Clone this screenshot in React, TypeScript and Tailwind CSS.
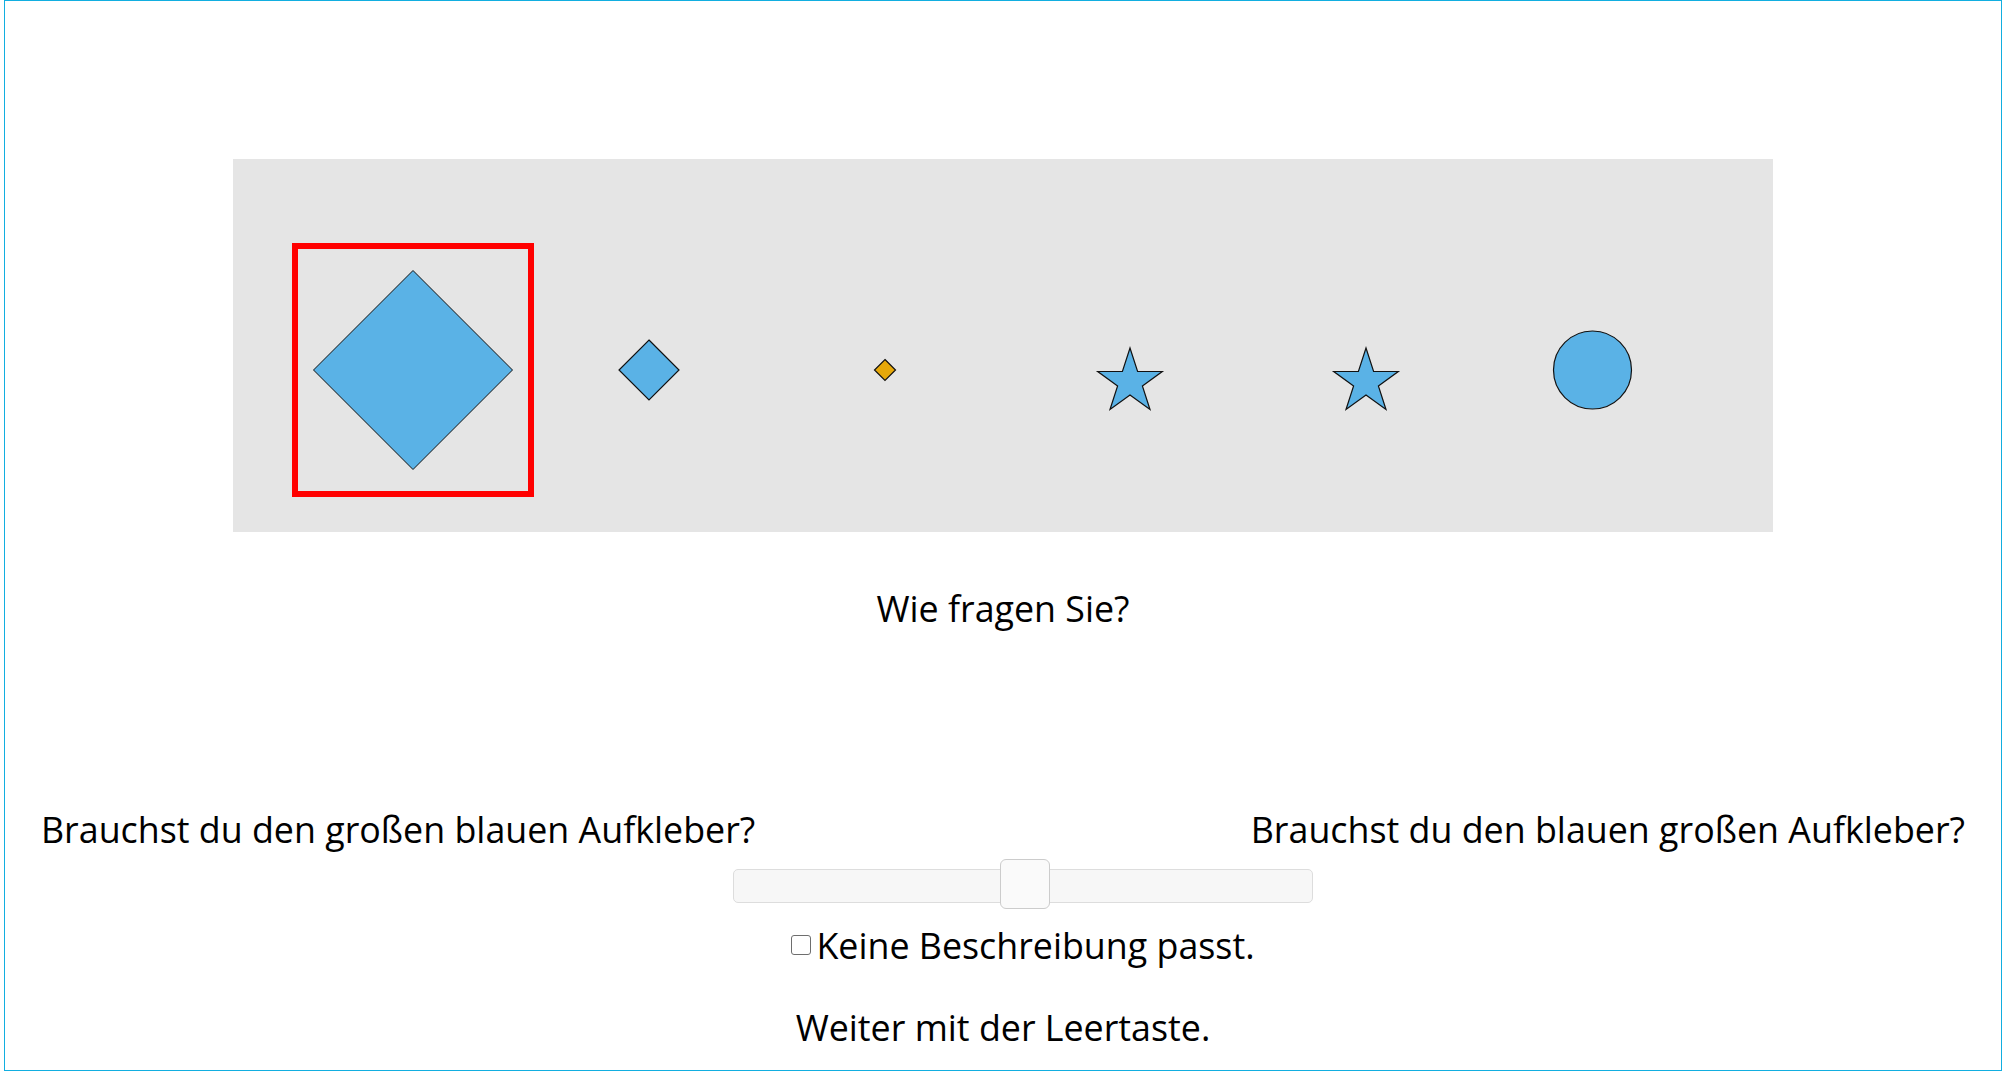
import React from "react";

const BLUE = "#5ab2e6";

// five-pointed star, points computed from the centre
function starPoints(cx: number, cy: number, R: number, r: number) {
  const pts: string[] = [];
  for (let i = 0; i < 10; i++) {
    const rad = i % 2 === 0 ? R : r;
    const a = (i * 36 * Math.PI) / 180;
    pts.push(`${(cx + rad * Math.sin(a)).toFixed(1)},${(cy - rad * Math.cos(a)).toFixed(1)}`);
  }
  return pts.join(" ");
}

function diamond(cx: number, cy: number, h: number) {
  return `${cx},${cy - h} ${cx + h},${cy} ${cx},${cy + h} ${cx - h},${cy}`;
}

function Stimuli() {
  return (
    <div className="mx-auto w-[1540px] h-[373px] bg-[#e5e5e5]">
      <svg width="1540" height="373" viewBox="0 0 1540 373">
        {/* selected item */}
        <rect x="62" y="87" width="236" height="248" fill="none" stroke="#ff0000" strokeWidth="6" />
        <polygon points={diamond(180, 211, 99.5)} fill={BLUE} stroke="#111" strokeWidth="1" />
        <polygon points={diamond(416, 211, 30)} fill={BLUE} stroke="#111" strokeWidth="1.2" />
        <polygon points={diamond(652, 211, 10.5)} fill="#e6a80a" stroke="#111" strokeWidth="1.2" />
        <polygon points={starPoints(897, 223, 34, 13)} fill={BLUE} stroke="#111" strokeWidth="1.2" />
        <polygon points={starPoints(1133, 223, 34, 13)} fill={BLUE} stroke="#111" strokeWidth="1.2" />
        <circle cx="1359.5" cy="211" r="39" fill={BLUE} stroke="#111" strokeWidth="1.2" />
      </svg>
    </div>
  );
}

export default function App() {
  return (
    <div className="min-h-screen bg-white text-black font-['Open_Sans',sans-serif] text-[35.8px] leading-[48px]">
      <div className="ml-[4px] w-[1998px] h-[1071px] border border-[#12aee0] pt-[158px]">
        <Stimuli />

        <p className="mt-[52px] text-center">Wie fragen Sie?</p>

        {/* answer options */}
        <div className="mt-[173px] flex justify-between px-[36px]">
          <span>Brauchst du den großen blauen Aufkleber?</span>
          <span>Brauchst du den blauen großen Aufkleber?</span>
        </div>

        <div className="mt-[16px] flex justify-center pl-[40px]">
          <div className="relative w-[580px] h-[34px] rounded-[5px] border border-[#dddddd] bg-[#f7f7f7]">
            <div className="absolute left-[266px] top-[-11px] w-[50px] h-[50px] rounded-[6px] border border-[#cccccc] bg-[#fafafa]" />
          </div>
        </div>

        <div className="mt-[18px] flex justify-center items-center pl-[40px]">
          <span className="w-[20px] h-[20px] rounded-[3px] border border-[#6e6e6e] bg-white mr-[5px]" />
          <span>Keine Beschreibung passt.</span>
        </div>

        <p className="mt-[34px] text-center">Weiter mit der Leertaste.</p>
      </div>
    </div>
  );
}
